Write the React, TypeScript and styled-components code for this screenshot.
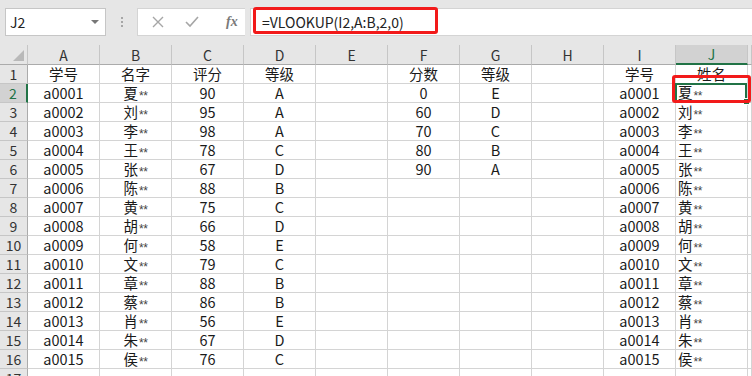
import React from "react";
import styled, { createGlobalStyle } from "styled-components";

const GlobalStyle = createGlobalStyle`
  html, body {
    margin: 0;
    padding: 0;
    background: #ffffff;
  }
  body {
    font-family: "Noto Sans CJK SC", "Noto Sans", sans-serif;
    overflow: hidden;
  }
`;

const Page = styled.div`
  width: 752px;
  height: 376px;
  overflow: hidden;
  display: flex;
  flex-direction: column;
  background: #ffffff;
`;

const Toolbar = styled.div`
  height: 45px;
  flex: none;
  background: #e6e6e6;
  display: flex;
  align-items: flex-start;
  padding-top: 8px;
  padding-left: 5px;
  box-sizing: border-box;
`;

const NameBox = styled.div`
  width: 101px;
  height: 28px;
  box-sizing: border-box;
  background: #ffffff;
  border: 1px solid #c6c6c6;
  display: flex;
  align-items: center;
  justify-content: space-between;
  padding: 0 6px 0 4px;
  font-size: 14px;
  color: #222;
`;

const Caret = styled.span`
  width: 0;
  height: 0;
  border-left: 4px solid transparent;
  border-right: 4px solid transparent;
  border-top: 4px solid #777;
`;

const Grip = styled.div`
  width: 31px;
  height: 28px;
  display: flex;
  flex-direction: column;
  align-items: center;
  justify-content: center;
  gap: 2px;
  span {
    width: 2px;
    height: 2px;
    background: #a6a6a6;
  }
`;

const FxButtons = styled.div`
  width: 108px;
  height: 28px;
  box-sizing: border-box;
  background: #ffffff;
  border: 1px solid #d4d4d4;
  border-right: none;
  display: flex;
  align-items: center;
  padding-left: 14px;
  gap: 21px;
  color: #a0a0a0;
`;

const FxLabel = styled.span`
  font-family: "Liberation Serif", serif;
  font-style: italic;
  font-weight: bold;
  font-size: 14px;
  color: #7a7a7a;
  margin-left: 6px;
`;

const FormulaInput = styled.div`
  flex: 1;
  height: 28px;
  margin-left: 5px;
  box-sizing: border-box;
  background: #ffffff;
  border: 1px solid #d4d4d4;
  border-right: none;
  position: relative;
  display: flex;
  align-items: center;
  padding-left: 11px;
  font-size: 14px;
  color: #222;
`;

const RedMark = styled.div<{ $top: number; $left: number; $right: number; $bottom: number }>`
  position: absolute;
  top: ${(p) => p.$top}px;
  left: ${(p) => p.$left}px;
  right: ${(p) => p.$right}px;
  bottom: ${(p) => p.$bottom}px;
  border: 3px solid #f21a1a;
  border-radius: 3px;
  pointer-events: none;
  z-index: 5;
`;

const Sheet = styled.div`
  display: grid;
  grid-template-columns: 28px repeat(10, 72px) 1fr;
  grid-template-rows: 20px;
  grid-auto-rows: 19px;
  flex: 1;
  font-size: 14.5px;
  color: #1a1a1a;
`;

const Corner = styled.div`
  background: #e6e6e6;
  border-right: 1px solid #c6c6c6;
  border-bottom: 1px solid #ababab;
  box-sizing: border-box;
  position: relative;
  &::after {
    content: "";
    position: absolute;
    right: 3px;
    bottom: 3px;
    width: 0;
    height: 0;
    border-left: 11px solid transparent;
    border-bottom: 11px solid #b9b9b9;
  }
`;

const ColHead = styled.div<{ $active?: boolean }>`
  background: ${(p) => (p.$active ? "#d2d2d2" : "#e6e6e6")};
  border-right: 1px solid #c6c6c6;
  border-bottom: ${(p) => (p.$active ? "2px solid #217346" : "1px solid #ababab")};
  box-sizing: border-box;
  display: flex;
  align-items: center;
  justify-content: center;
  font-size: 14px;
  color: ${(p) => (p.$active ? "#217346" : "#333")};
  line-height: 1;
`;

const RowHead = styled.div<{ $active?: boolean }>`
  background: ${(p) => (p.$active ? "#d2d2d2" : "#e6e6e6")};
  border-right: ${(p) => (p.$active ? "2px solid #217346" : "1px solid #ababab")};
  border-bottom: 1px solid #c6c6c6;
  box-sizing: border-box;
  display: flex;
  align-items: center;
  justify-content: center;
  font-size: 14px;
  color: ${(p) => (p.$active ? "#217346" : "#333")};
`;

const Cell = styled.div<{ $align?: "left" | "center"; $selected?: boolean }>`
  border-right: 1px solid #d4d4d4;
  border-bottom: 1px solid #d4d4d4;
  box-sizing: border-box;
  display: flex;
  align-items: center;
  justify-content: ${(p) => (p.$align === "left" ? "flex-start" : "center")};
  padding-left: ${(p) => (p.$align === "left" ? "2px" : "0")};
  white-space: nowrap;
  overflow: visible;
  position: relative;
  line-height: 1;
  ${(p) =>
    p.$selected &&
    `
    box-shadow: inset 0 0 0 2px #217346;
    margin: -1px 0 0 -1px;
    padding-left: 3px;
  `}
`;

const Stars = styled.span`
  font-family: "Liberation Sans", sans-serif;
  font-size: 12px;
  color: #444;
  letter-spacing: -0.5px;
  margin-left: 1px;
  position: relative;
  top: 3px;
`;

const Handle = styled.span`
  position: absolute;
  right: -3px;
  bottom: -3px;
  width: 5px;
  height: 5px;
  background: #217346;
  border: 1px solid #fff;
  z-index: 4;
`;

const CloseIcon = () => (
  <svg width="12" height="12" viewBox="0 0 12 12">
    <path d="M1 1 L11 11 M11 1 L1 11" stroke="#a6a6a6" strokeWidth="1.4" fill="none" />
  </svg>
);

const CheckIcon = () => (
  <svg width="14" height="12" viewBox="0 0 14 12">
    <path d="M1 6 L5 10 L13 1" stroke="#a6a6a6" strokeWidth="1.6" fill="none" />
  </svg>
);

const cols = ["A", "B", "C", "D", "E", "F", "G", "H", "I", "J"];

const students: [string, string, number, string][] = [
  ["a0001", "夏", 90, "A"],
  ["a0002", "刘", 95, "A"],
  ["a0003", "李", 98, "A"],
  ["a0004", "王", 78, "C"],
  ["a0005", "张", 67, "D"],
  ["a0006", "陈", 88, "B"],
  ["a0007", "黄", 75, "C"],
  ["a0008", "胡", 66, "D"],
  ["a0009", "何", 58, "E"],
  ["a0010", "文", 79, "C"],
  ["a0011", "章", 88, "B"],
  ["a0012", "蔡", 86, "B"],
  ["a0013", "肖", 56, "E"],
  ["a0014", "朱", 67, "D"],
  ["a0015", "侯", 76, "C"],
];

const grades: [number, string][] = [
  [0, "E"],
  [60, "D"],
  [70, "C"],
  [80, "B"],
  [90, "A"],
];

const Name = ({ s }: { s: string }) => (
  <>
    {s}
    <Stars>**</Stars>
  </>
);

export default function App() {
  const rows: React.ReactNode[][] = [];
  rows.push(["学号", "名字", "评分", "等级", "", "分数", "等级", "", "学号", "姓名"]);
  for (let i = 0; i < 16; i++) {
    if (i < 15) {
      const [id, nm, score, grade] = students[i];
      const g = grades[i];
      rows.push([
        id,
        <Name s={nm} />,
        score,
        grade,
        "",
        g ? g[0] : "",
        g ? g[1] : "",
        "",
        id,
        <Name s={nm} />,
      ]);
    } else {
      rows.push(["", "", "", "", "", "", "", "", "", ""]);
    }
  }

  return (
    <Page>
      <GlobalStyle />
      <Toolbar>
        <NameBox>
          J2
          <Caret />
        </NameBox>
        <Grip>
          <span />
          <span />
          <span />
        </Grip>
        <FxButtons>
          <CloseIcon />
          <CheckIcon />
          <FxLabel>fx</FxLabel>
        </FxButtons>
        <FormulaInput>
          =VLOOKUP(I2,A:B,2,0)
          <RedMark $top={-2} $left={2} $right={314} $bottom={1} />
        </FormulaInput>
      </Toolbar>
      <Sheet>
        <Corner />
        {cols.map((c) => (
          <ColHead key={c} $active={c === "J"}>
            {c}
          </ColHead>
        ))}
        <ColHead />
        {rows.map((r, ri) => (
          <React.Fragment key={ri}>
            <RowHead $active={ri === 1}>{ri + 1}</RowHead>
            {r.map((v, ci) => {
              const isJ = ci === 9;
              const selected = isJ && ri === 1;
              return (
                <Cell key={ci} $align={isJ && ri > 0 ? "left" : "center"} $selected={selected}>
                  {v}
                  {selected && (
                    <>
                      <Handle />
                      <RedMark $top={-8} $left={-3} $right={-4} $bottom={-1} />
                    </>
                  )}
                </Cell>
              );
            })}
            <Cell />
          </React.Fragment>
        ))}
      </Sheet>
    </Page>
  );
}
